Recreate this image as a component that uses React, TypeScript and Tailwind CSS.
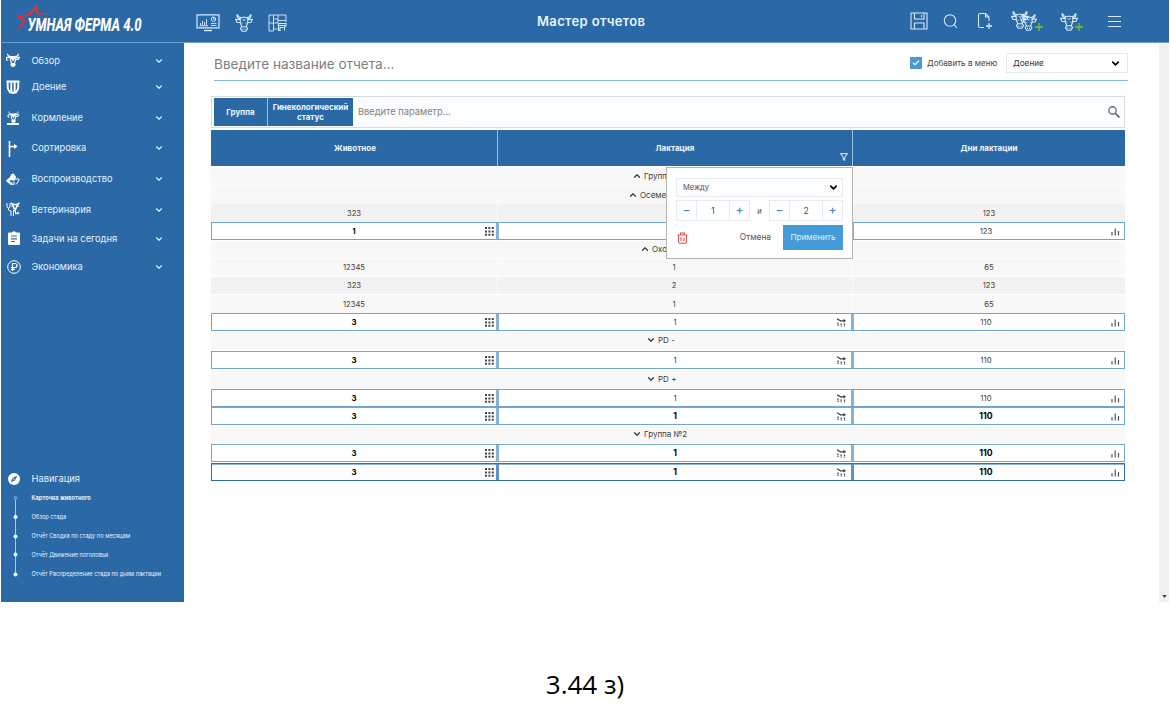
import type { ReactNode } from "react";
import { ChevronDown, ChevronUp, Check } from "lucide-react";
import clsx from "clsx";

interface IconProps {
  className?: string;
}

const COW_HEAD =
  "M3 .5C2 4 4 6.5 8 6.5M21 .5C22 4 20 6.5 16 6.5M3 .5L5.5 4L9 5L12 4L15 5L18.5 4L21 .5M7 7.5L.8 7L2.5 11L7 11.5M17 7.5L23.2 7L21.5 11L17 11.5M7 7.5V11.5L9 17M17 7.5V11.5L15 17M9 17H15L16.8 19.5L14.5 23H9.5L7.2 19.5ZM10.5 19.5V21M13.5 19.5V21";

function Cow({ className }: IconProps) {
  return (
    <svg viewBox="0 0 24 24" className={className} fill="none" stroke="currentColor" strokeWidth="1.5">
      <path d={COW_HEAD} />
      <path d="M9.5 11.5V13M14.5 11.5V13M10 6.5L12 9L14 6.5" strokeWidth="1.2" />
    </svg>
  );
}

function CowSolid({ className }: IconProps) {
  return (
    <svg viewBox="0 0 24 24" className={className} fill="none" stroke="currentColor" strokeWidth="2">
      <path d="M3 1C2 4 5 6 9 6M21 1C22 4 19 6 15 6M8 7.5H1V12H4M16 7.5H23L21 11H17M7.5 8V12L9.5 18M16.5 8V12L14.5 18" />
      <path d="M7 5H17L15.5 9L12 15L8.5 9ZM9 17H15L16.8 20L14.5 23.5H9.5L7.2 20Z" fill="currentColor" stroke="none" />
    </svg>
  );
}

function Dashboard() {
  return (
    <svg viewBox="0 0 24 18" className="h-[18px] w-6" fill="none" stroke="currentColor">
      <path d="M1 .8H23V13.8H1Z" strokeWidth="1.2" />
      <path d="M8 16.5H16" strokeWidth="1.4" />
      <path d="M4.5 11.5V9M6.5 11.5V7M8.5 11.5V8M10.5 11.5V5M3.5 11.8H12M15 9.5H20.5M15 11.5H20.5" strokeWidth=".9" />
      <circle cx="17.5" cy="5.2" r="2.2" />
      <path d="M17.5 3V5.2H19.7" strokeWidth=".9" />
    </svg>
  );
}

function Barn() {
  return (
    <svg viewBox="0 0 19 18" className="h-[18px] w-[19px]" fill="none" stroke="currentColor" strokeWidth=".9">
      <path d="M1 1H5.5V17H1ZM1 9H10M5.5 5H10M10 1V9M5.5 1H18V8M10 6.5H18M5.5 15H9.5" />
      <path d="M10.5 9.5H18V12L16.5 13V16.5M10.5 9.5V16.5H12V13.5H15.5M11 11.5H17" strokeWidth="1.1" />
    </svg>
  );
}

function Logo() {
  return (
    <svg viewBox="0 0 130 32" className="h-8 w-[130px] overflow-visible">
      <path
        d="M1 13L13 11.2L21.5 2L23.5 9.5L42 10.8L23 11.5L21.5 11L20.3 6L15 12.8L6 13.8L11.5 17.8L5 25.5L1.5 27.5L8.5 18.2Z"
        fill="#e52e35"
      />
      <text
        x="12.5"
        y="27.5"
        textLength="114"
        lengthAdjust="spacingAndGlyphs"
        fill="white"
        className="font-['Roboto',sans-serif] text-[18.5px] font-extrabold italic"
      >
        УМНАЯ ФЕРМА 4.0
      </text>
    </svg>
  );
}

function TopBar() {
  return (
    <header className="flex h-[43px] shrink-0 items-center border-b border-[#6ea0cd] bg-[#2b68a6] text-[#d9eafa]">
      <div className="w-[194.5px] pb-1 pl-[14px]">
        <Logo />
      </div>
      <div className="flex w-[341.5px] items-center pt-[3px]">
        <Dashboard />
        <Cow className="ml-[15px] h-[18px] w-[18px]" />
        <span className="ml-[15px]">
          <Barn />
        </span>
      </div>
      <h1 className="pt-0.5 text-[13px] font-semibold tracking-[0.35px] text-[#e9f5ff]">Мастер отчетов</h1>
      <div className="ml-auto flex items-center pr-[48px]">
        <svg viewBox="0 0 18 18" className="mr-[15px] size-[18px]" fill="none" stroke="currentColor" strokeWidth="1.1">
          <path d="M1 1H17V17H1ZM4.5 1V7H14V1M4.5 17V11H14V17M11.5 3V5" />
        </svg>
        <svg viewBox="0 0 16 16" className="mr-[18px] size-4" fill="none" stroke="currentColor" strokeWidth="1.1">
          <circle cx="7" cy="7.5" r="5.7" />
          <path d="M11 11.5L14 15" />
        </svg>
        <svg viewBox="0 0 17 18" className="mr-[17px] h-[18px] w-[17px]" fill="none" stroke="currentColor" strokeWidth="1.1">
          <path d="M7 15.5H3Q1.5 15.5 1.5 14V3Q1.5 1.5 3 1.5H8.5L12 5V9M8.5 1.5V5H12" />
          <path d="M12 11V17M9 14H15" strokeWidth="1.3" />
        </svg>
        <span className="relative mr-[18px] flex h-5 w-[31px]">
          <Cow className="size-[18px] shrink-0" />
          <Cow className="-ml-[9px] mt-[3px] size-[17px] shrink-0" />
          <Plus />
        </span>
        <span className="relative mr-[26px] flex h-5 w-[22px]">
          <Cow className="mt-0.5 size-[18px]" />
          <Plus />
        </span>
        <svg viewBox="0 0 13 13" className="size-[13px]" stroke="currentColor" strokeWidth="1">
          <path d="M0 1.5H13M0 6.5H13M0 11.5H13" />
        </svg>
      </div>
    </header>
  );
}

function Plus() {
  return (
    <svg viewBox="0 0 8 8" className="absolute -right-px bottom-0 size-2" stroke="#74c02e" strokeWidth="1.3">
      <path d="M4 0V8M0 4H8" />
    </svg>
  );
}

const menu: { label: string; gap: string; icon: ReactNode }[] = [
  { label: "Обзор", gap: "mt-2", icon: <CowSolid className="mb-0.5 size-[14px]" /> },
  {
    label: "Доение",
    gap: "mt-1.5",
    icon: (
      <svg viewBox="0 0 14 14" className="size-[14px]" fill="none" stroke="currentColor" strokeWidth="1.9">
        <path d="M.5 1.5H13.5M1.7 1V7Q1.7 10 4 12M5.3 1V10Q5.3 12.5 7 13Q8.7 12.5 8.7 10V1M12.3 1V7Q12.3 10 10 12M3 12L7 13L11 12" />
      </svg>
    ),
  },
  {
    label: "Кормление",
    gap: "mt-[11px]",
    icon: (
      <span className="flex flex-col items-center">
        <CowSolid className="h-[12px] w-[13px]" />
        <i className="h-0.5 w-3 bg-white" />
      </span>
    ),
  },
  {
    label: "Сортировка",
    gap: "mt-[10px]",
    icon: (
      <svg viewBox="0 0 14 16" className="mt-0.5 h-4 w-[14px]" fill="none" stroke="currentColor" strokeWidth="1.6">
        <path d="M3.5 0V16M3.5 10V7Q3.5 5.5 6 5.5H9" />
        <path d="M8 2.8L11.5 5.5L8 8Z" fill="currentColor" stroke="none" />
      </svg>
    ),
  },
  {
    label: "Воспроизводство",
    gap: "mt-[11px]",
    icon: (
      <svg viewBox="0 0 14 14" className="size-[14px]" fill="currentColor">
        <path d="M0 8.5L4 5L5.5 2L7.5 1.5L10 4.5L9.5 7L7 8.5L4.5 8L3.5 10L6.5 10.5V12L3 11.5L1 10Z" />
        <path d="M7.5 9L9.5 7L13 7L12.5 9L10.5 12L9.5 12M8 9.5V12.5M4 12.3H8" fill="none" stroke="currentColor" />
      </svg>
    ),
  },
  {
    label: "Ветеринария",
    gap: "mt-[11px]",
    icon: (
      <svg viewBox="0 0 14 16" className="mb-0.5 h-4 w-[14px]" fill="none" stroke="currentColor" strokeWidth="1">
        <path d="M1 2V5Q1 7 2.5 7Q4 7 4 5V2M2.5 7V9L5 10V15M7.5 9V15M9.5 9V13L12 12" />
        <path d="M5 2L7 3.5H11L13.5 2M5.5 5L7 5L9 9.5L11 5L13 5" strokeWidth="1.6" />
        <circle cx="12" cy="12" r=".9" />
      </svg>
    ),
  },
  {
    label: "Задачи на сегодня",
    gap: "mt-[9px]",
    icon: (
      <svg viewBox="0 0 14 14" className="mb-0.5 ml-px size-[14px]">
        <path d="M2 1.5H5Q7-1 9 1.5H12Q13 1.5 13 2.5V13Q13 14 12 14H2Q1 14 1 13V2.5Q1 1.5 2 1.5Z" fill="white" />
        <path d="M4 5H10M4 7.8H10M4 10.5H8" stroke="#2b68a6" strokeWidth="1.2" />
      </svg>
    ),
  },
  {
    label: "Экономика",
    gap: "mt-2",
    icon: (
      <svg viewBox="0 0 14 14" className="ml-0.5 size-[14px] shrink-0" fill="none" stroke="currentColor">
        <circle cx="7" cy="7" r="6.3" />
        <path d="M5.5 11V3.5H8Q10 3.5 10 5.5Q10 7.5 8 7.5H4M4 9.3H8" strokeWidth="1.2" />
      </svg>
    ),
  },
];

const pages = ["Обзор стада", "Отчёт Сводка по стаду по месяцам", "Отчёт Движение поголовья", "Отчёт Распределение стада по дням лактации"];

function Sidebar() {
  return (
    <aside className="flex w-[183px] shrink-0 flex-col bg-[#2b68a6] text-[#e3f1ff]">
      {menu.map((item) => (
        <div key={item.label} className={clsx("flex h-5 items-center pl-[4px]", item.gap)}>
          <span className="flex w-4 justify-center text-white">{item.icon}</span>
          <span className="ml-[10.5px] text-[9.3px] leading-5">{item.label}</span>
          <ChevronDown className="ml-auto mr-[20px] size-[10px]" strokeWidth={2.6} />
        </div>
      ))}
      <div className="mt-auto flex h-5 items-center pl-[5px]">
        <svg viewBox="0 0 12 12" className="ml-[2px] size-3">
          <circle cx="6" cy="6" r="6" fill="white" />
          <path d="M9.3 2.7L7.2 7.2L2.7 9.3L4.8 4.8Z" fill="#2b68a6" />
          <circle cx="6" cy="6" r=".8" fill="white" />
        </svg>
        <span className="ml-[11.5px] text-[9.3px]">Навигация</span>
      </div>
      <div className="mb-[21px] mt-[2px] flex pl-3 text-[5.65px]">
        <svg viewBox="0 0 5 90" className="h-[90px] w-[5px]">
          <path d="M2.5 7V82" stroke="#a7cbe9" />
          <circle cx="2.5" cy="7" r="2" fill="#4a9fdc" />
          <circle cx="2.5" cy="26" r="2" fill="white" />
          <circle cx="2.5" cy="45.5" r="2" fill="white" />
          <circle cx="2.5" cy="63.5" r="2" fill="white" />
          <circle cx="2.5" cy="83.5" r="2" fill="white" />
        </svg>
        <div className="ml-[13.5px] flex flex-col gap-[7px] whitespace-nowrap pt-px leading-3">
          <div className="font-bold">Карточка животного</div>
          {pages.map((page) => (
            <div key={page}>{page}</div>
          ))}
        </div>
      </div>
    </aside>
  );
}

function Stepper({ value }: { value: number }) {
  return (
    <div className="flex h-[21px] w-[74px] items-center border border-[#e8ebf2] text-[#3f86bd]">
      <span className="flex-1 pb-0.5 text-center text-[12px] font-medium leading-none">−</span>
      <span className="h-full w-[34px] border-x border-[#e8ebf2] text-center text-[8.5px] leading-[20px] text-[#44444c]">
        {value}
      </span>
      <span className="flex-1 pb-0.5 text-center text-[12px] font-medium leading-none">+</span>
    </div>
  );
}

function FilterPopup() {
  return (
    <div className="absolute -right-[1px] top-[37px] z-10 flex h-[92px] w-[187px] flex-col border border-[#b3b3b3] bg-white px-[9px] pt-[10px] text-[8px] font-normal leading-none text-[#505062]">
      <div className="flex h-[19px] shrink-0 items-center justify-between border border-[#e8ebf2] bg-[#fcfdff] pl-1.5 pr-[3px] text-[7.5px]">
        Между
        <ChevronDown className="size-[11px] text-black" strokeWidth={3.5} />
      </div>
      <div className="mt-[3px] flex items-center justify-between">
        <Stepper value={1} />
        <span className="pt-0.5 text-[7.5px]">и</span>
        <Stepper value={2} />
      </div>
      <div className="mt-1 flex items-center">
        <svg viewBox="0 0 11 12" className="ml-px h-3 w-[11px]" fill="none" stroke="#dc4b50" strokeWidth="1.1">
          <path d="M.5 3H10.5M3.5 3V1H7.5V3M1.5 3V9.5Q1.5 11.3 3 11.3H8Q9.5 11.3 9.5 9.5V3M4 5.5V9M7 5.5V9" />
        </svg>
        <span className="ml-auto mr-3 text-[8.3px]">Отмена</span>
        <button className="h-[25px] w-[60px] bg-[#459bd9] text-[8.2px] text-[#dff1ff]">Применить</button>
      </div>
    </div>
  );
}

function GridDots() {
  return (
    <svg viewBox="0 0 9 9" className="size-[9px]" fill="#444">
      {[0, 3.4, 6.8].map((y) => (
        <path key={y} d={`M0 ${y}h2v2h-2zM3.4 ${y}h2v2h-2zM6.8 ${y}h2v2h-2z`} />
      ))}
    </svg>
  );
}

function Trend() {
  return (
    <svg viewBox="0 0 9 9" className="size-[9px]" fill="none" stroke="#3a3f46" strokeWidth="1">
      <path d="M0 .8L3.5 2.8H8" strokeWidth="1.2" />
      <path d="M6.5 .8L9 2.8L6.5 4.6Z" fill="#3a3f46" stroke="none" />
      <path d="M1 4.6V8.5M4.2 5.6V8.5M7.5 5.6V8.5" strokeWidth="1.2" strokeDasharray="1.5 .5" />
    </svg>
  );
}

function Bars() {
  return (
    <svg viewBox="0 0 9 8" className="h-2 w-[9px]" stroke="#555" strokeWidth="1.2">
      <path d="M1 4V7.5M4.2 .5V7.5M7.5 3V7.5" />
    </svg>
  );
}

type Row =
  | { kind: "group"; size: string; title: string; open: boolean; shift: string }
  | { kind: "data"; size: string; cells: string[]; dark?: boolean }
  | { kind: "total"; size: string; cells: string[]; bold?: boolean; strong?: boolean };

const rows: Row[] = [
  { kind: "group", size: "mt-[2px] h-[17px] pb-0.5", title: "Группа №1", open: true, shift: "pl-[421px]" },
  { kind: "group", size: "mt-px h-[18px] pb-px", title: "Осеменена", open: true, shift: "pl-[417px]" },
  { kind: "data", size: "h-[18px]", cells: ["323", "2", "123"], dark: true },
  { kind: "total", size: "h-[18px]", cells: ["1", "1", "123"] },
  { kind: "group", size: "mt-px h-[17px] pb-0.5", title: "Охота", open: true, shift: "pl-[429px]" },
  { kind: "data", size: "mt-px h-[17px]", cells: ["12345", "1", "65"] },
  { kind: "data", size: "mt-px h-[17px]", cells: ["323", "2", "123"], dark: true },
  { kind: "data", size: "mt-px h-[18px]", cells: ["12345", "1", "65"] },
  { kind: "total", size: "h-[18px]", cells: ["3", "1", "110"] },
  { kind: "group", size: "mt-px h-[17px] pb-px", title: "PD -", open: false, shift: "pl-[435px]" },
  { kind: "total", size: "mt-[2px] h-[18px]", cells: ["3", "1", "110"] },
  { kind: "group", size: "mt-px h-[18px] pb-px", title: "PD +", open: false, shift: "pl-[435px]" },
  { kind: "total", size: "mt-px h-[18px]", cells: ["3", "1", "110"] },
  { kind: "total", size: "h-[18px]", cells: ["3", "1", "110"], bold: true },
  { kind: "group", size: "mt-px h-[17px] pb-px", title: "Группа №2", open: false, shift: "pl-[421px]" },
  { kind: "total", size: "mt-px h-[18px]", cells: ["3", "1", "110"], bold: true },
  { kind: "total", size: "mt-px h-[18px]", cells: ["3", "1", "110"], bold: true, strong: true },
];

const columns = ["w-[287px]", "w-[355px]", "w-[272px]"];
const actions = [<GridDots />, <Trend />, <Bars />];

function TableRow({ row }: { row: Row }) {
  if (row.kind === "group") {
    const Chevron = row.open ? ChevronUp : ChevronDown;
    return (
      <div className={clsx("flex items-center gap-[2px] bg-[#f8f8f8]", row.size, row.shift)}>
        <Chevron className="size-[10px]" strokeWidth={3} />
        {row.title}
      </div>
    );
  }

  if (row.kind === "data") {
    return (
      <div className={clsx("flex items-stretch text-[7.6px]", row.dark ? "bg-[#f2f2f2]" : "bg-[#f8f8f8]", row.size)}>
        {row.cells.map((cell, i) => (
          <div
            key={i}
            className={clsx(
              "flex items-center justify-center pt-px",
              columns[i],
              i < 2 && "border-r border-[#fcfcfc]",
              i === 1 && "pr-0.5",
            )}
          >
            {cell}
          </div>
        ))}
      </div>
    );
  }

  return (
    <div
      className={clsx(
        "flex items-stretch border bg-white",
        row.strong ? "border-[#2e6fac] shadow-[inset_0_1px_0_#8fb6d8]" : "border-[#71a6d1]",
        row.size,
      )}
    >
      {row.cells.map((cell, i) => (
        <div
          key={i}
          className={clsx(
            "relative flex items-center justify-center pt-px",
            columns[i],
            i === 2 && "-ml-0.5 pr-1",
            i < 2 && "border-r-3",
            row.strong ? "border-[#5b94c5]" : "border-[#85b2d7]",
            (i === 0 || row.bold) && "font-bold text-black",
            i > 0 && row.bold ? "text-[8.7px]" : "text-[7.8px]",
          )}
        >
          {cell}
          <span className={clsx("absolute", i === 1 ? "right-[5px]" : i === 0 ? "right-0.5" : "right-1")}>{actions[i]}</span>
        </div>
      ))}
    </div>
  );
}

function ReportTable() {
  return (
    <section className="mt-[2px] w-[914px] text-[8px] leading-none text-[#3c3c3c]">
      <div className="flex h-9 bg-[#2b68a6] text-center text-[8px] font-bold leading-9 text-[#eef7ff]">
        <div className="w-[287px] border-r border-[#9bc0df] pl-0.5">Животное</div>
        <div className="relative w-[355px] border-r border-[#9bc0df]">
          Лактация
          <svg viewBox="0 0 8 8" className="absolute bottom-[5px] right-1 size-2" fill="none" stroke="currentColor" strokeWidth="1">
            <path d="M.5 .7H7.5L4.8 4V7.3L3.2 6.5V4Z" />
          </svg>
          <FilterPopup />
        </div>
        <div className="w-[272px]">Дни лактации</div>
      </div>
      {rows.map((row, i) => (
        <TableRow key={i} row={row} />
      ))}
    </section>
  );
}

export default function App() {
  return (
    <div className="flex h-[722px] w-[1170px] flex-col overflow-hidden bg-white pl-px pr-px font-['Inter','Noto_Sans',sans-serif]">
      <TopBar />
      <div className="flex h-[559px] shrink-0">
        <Sidebar />
        <main className="flex-1 pl-[27px] pt-[10px]">
          <div className="ml-[3px] flex h-[28px] w-[914px] items-start border-b-[1.5px] border-[#8bb9dd]">
            <span className="pt-px text-[13.6px] leading-5 text-[#808080]">Введите название отчета...</span>
            <span className="ml-auto mt-1 flex size-3 items-center justify-center rounded-[1px] bg-[#459bd9]">
              <Check className="size-2 text-white" strokeWidth={3.5} />
            </span>
            <span className="ml-[5px] w-[79px] whitespace-nowrap text-[8.1px] leading-5 text-[#444]">Добавить в меню</span>
            <div className="flex h-5 w-[122px] items-center justify-between border border-[#e3e7ef] pl-1.5 pr-[6px] text-[8.2px] text-[#333]">
              Доение
              <ChevronDown className="size-[11px] text-black" strokeWidth={3.5} />
            </div>
          </div>
          <div className="mt-[15px] flex h-8 w-[914px] items-center border border-[#d8dcdc] bg-[#fcfdff] pl-0.5 pr-1">
            <div className="flex h-7 items-center bg-[#2b68a6] text-center text-[8px] font-bold leading-[10px] text-[#eef7ff]">
              <span className="flex h-full w-[54px] items-center justify-center border-r border-[#9bc0df]">Группа</span>
              <span className="w-[85px]">
                Гинекологический
                <br />
                статус
              </span>
            </div>
            <span className="ml-[5px] text-[9.3px] text-[#808080]">Введите параметр...</span>
            <svg viewBox="0 0 12 12" className="ml-auto size-3" fill="none" stroke="#6b6b80" strokeWidth="1.4">
              <circle cx="4.5" cy="4.5" r="3.7" />
              <path d="M7.3 7.3L11.5 11.5" strokeWidth="1.8" />
            </svg>
          </div>
          <ReportTable />
        </main>
        <div className="mt-px flex w-[10px] items-end justify-center bg-[#f0f0f0] pb-1">
          <svg viewBox="0 0 6 4" className="h-[3px] w-[5px]" fill="#444">
            <path d="M0 0H6L3 4Z" />
          </svg>
        </div>
      </div>
      <p className="mt-[64px] text-center font-['Open_Sans','Noto_Sans',sans-serif] text-[26px] font-medium leading-9 text-black">
        3.44 з)
      </p>
    </div>
  );
}
